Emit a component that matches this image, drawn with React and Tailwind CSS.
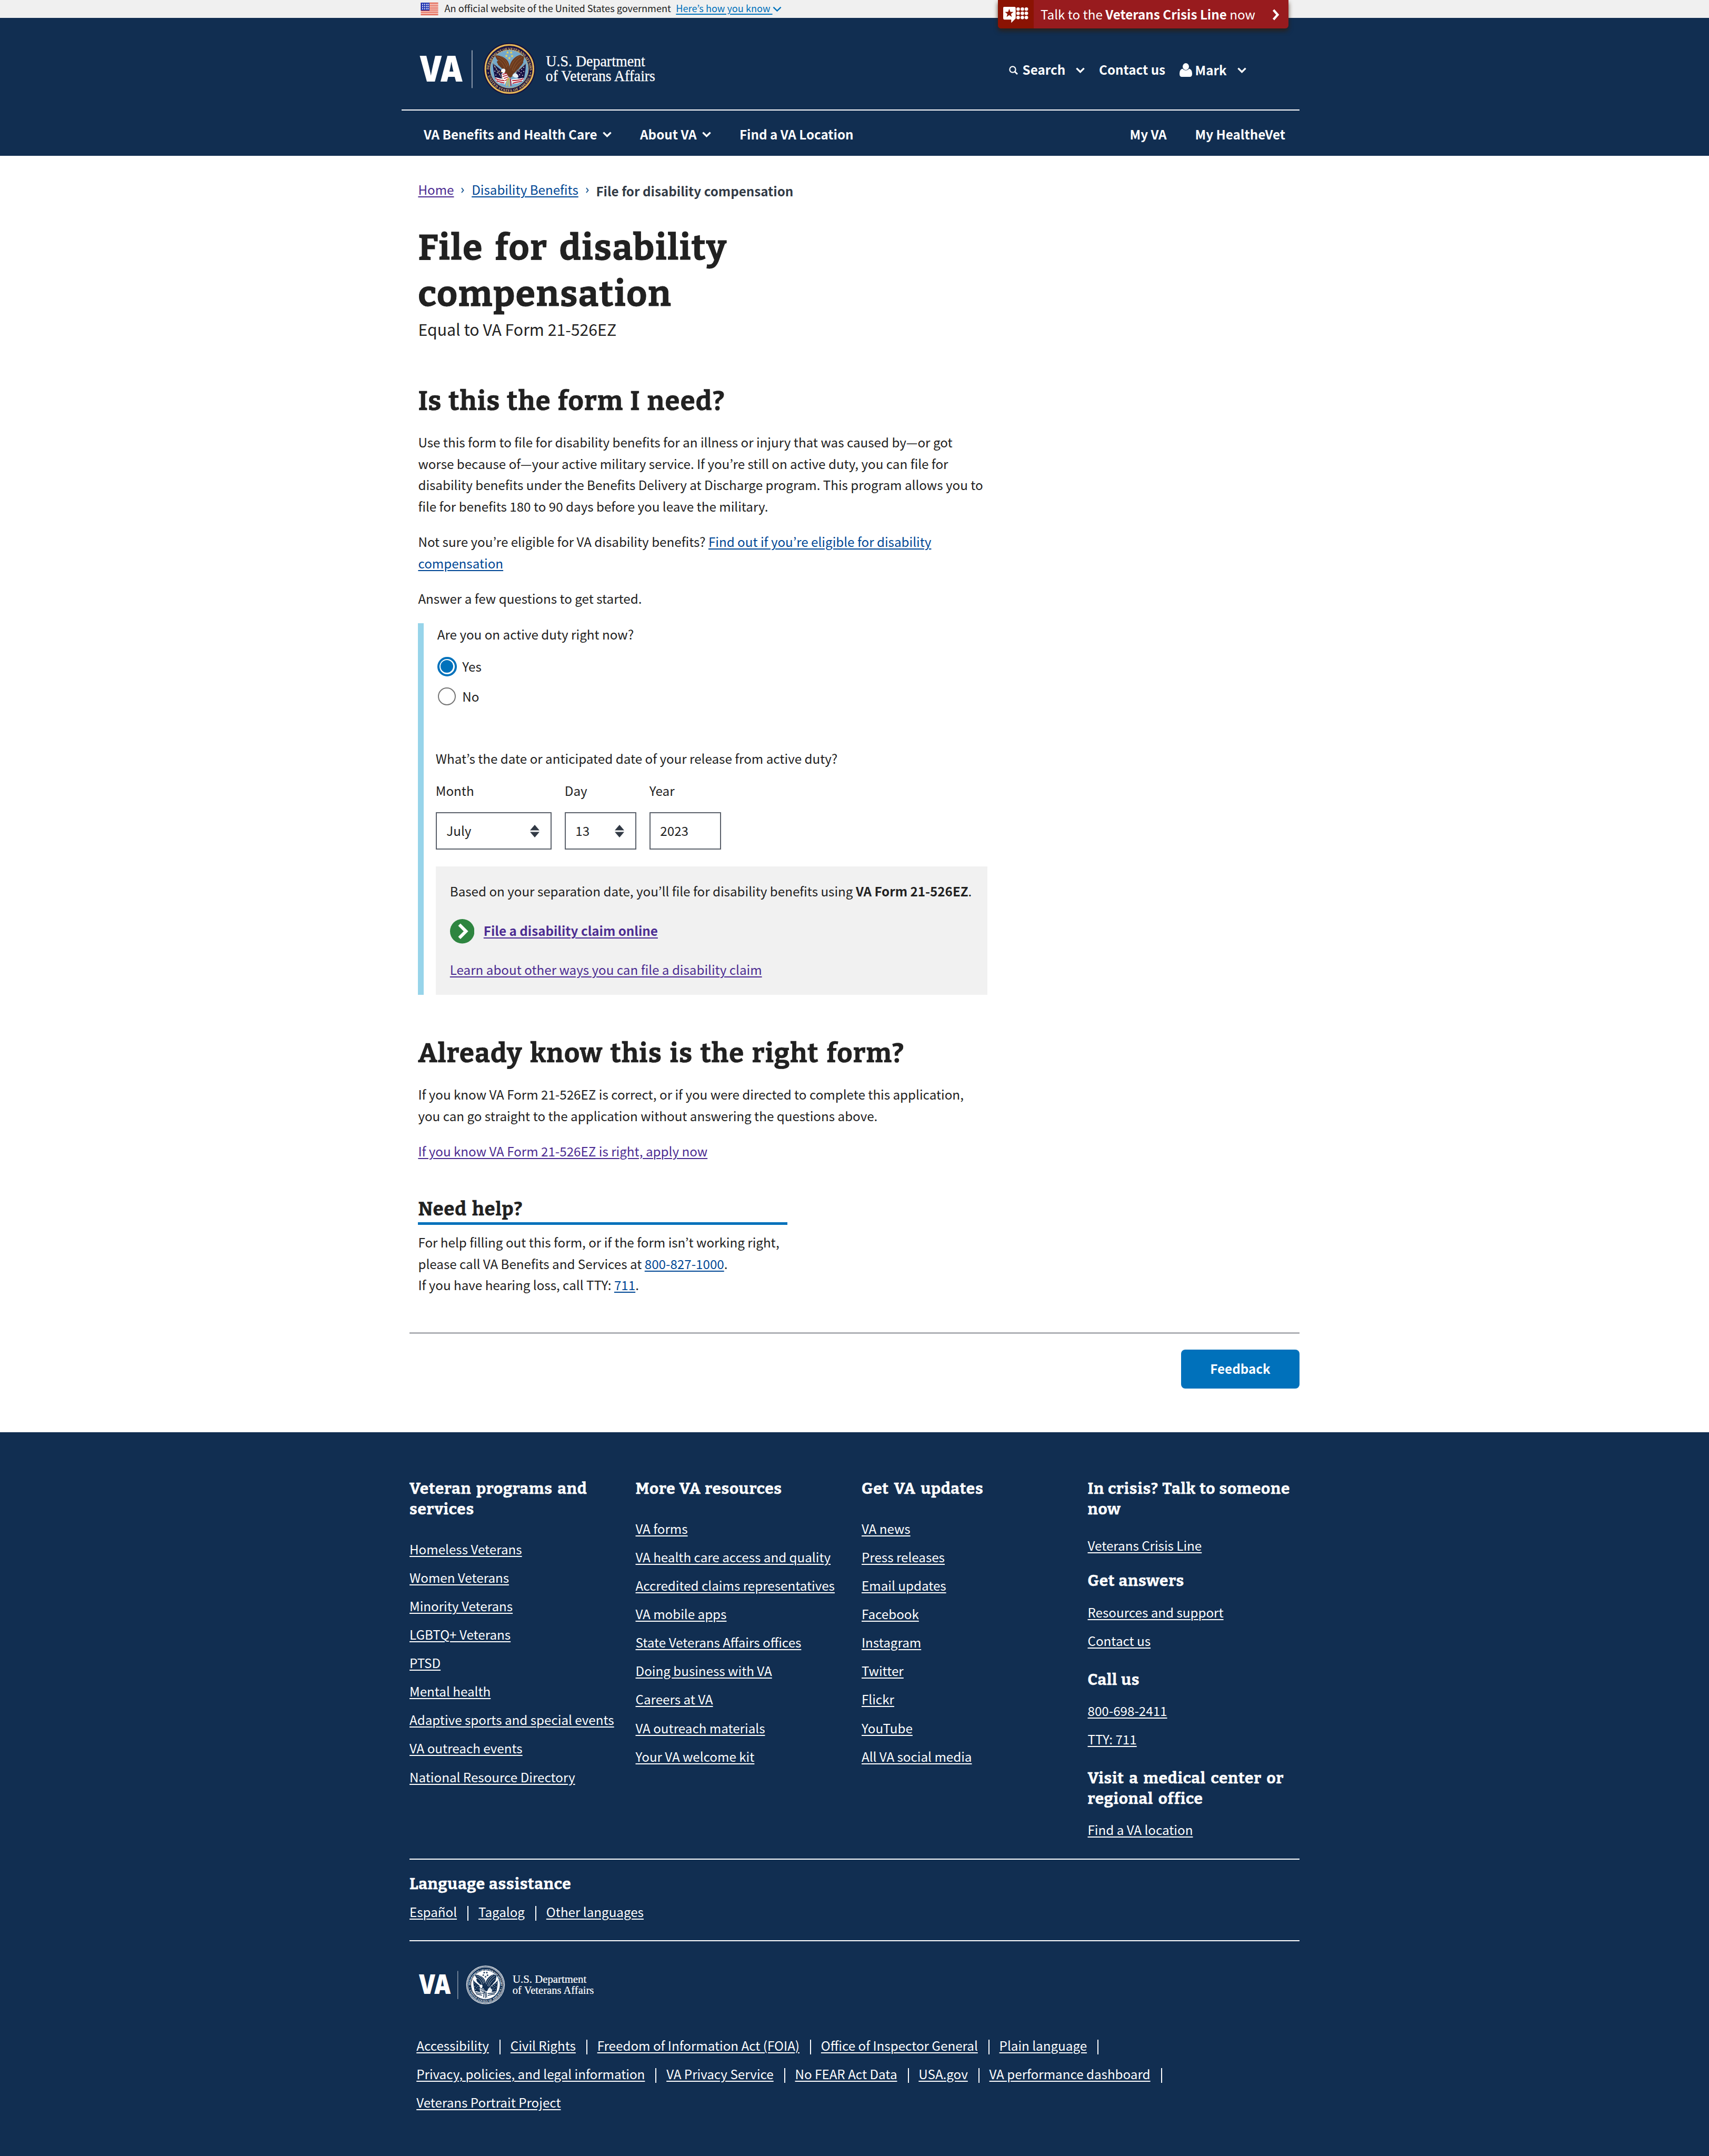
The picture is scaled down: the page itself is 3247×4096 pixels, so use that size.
import React from "react";

const SANS = "font-['Noto_Sans_CJK_KR','Noto_Sans',sans-serif]";
const SLAB = "font-['Bitter','DejaVu_Serif_Condensed','DejaVu_Serif',serif] font-bold tracking-[0.0255em] [-webkit-text-stroke:0.014em_currentColor]";
const LINK = "underline decoration-[2px] underline-offset-[3px]";

function Chevron({ className = "", w = 3.4 }) {
  return (
    <svg viewBox="0 0 17 11" className={`h-[11px] w-[17px] shrink-0 ${className}`} fill="none" stroke="currentColor" strokeWidth={w}>
      <path d="M1.4 1.6 L8.5 8.6 L15.6 1.6" />
    </svg>
  );
}

function Flag() {
  return (
    <svg viewBox="0 0 40 29" className="mt-[5px] h-[24px] w-[34px] shrink-0">
      <rect width="40" height="29" fill="#fff" />
      {[0, 4.5, 9, 13.4, 17.8, 22.2, 26.5].map((y) => (
        <rect key={y} y={y} width="40" height="2.4" fill="#dd4a34" />
      ))}
      <rect width="20" height="18" fill="#1e33b1" />
      {[2.5, 7.5, 12.5].map((y) => [3.5, 8, 12.5, 16].map((x) => <rect key={`${x}-${y}`} x={x} y={y} width="2" height="3" fill="#fff" />))}
    </svg>
  );
}

const star = (cx, cy, r) =>
  Array.from({ length: 10 }, (_, i) => {
    const a = (Math.PI / 5) * i - Math.PI / 2;
    const q = i % 2 ? r * 0.42 : r;
    return `${(cx + q * Math.cos(a)).toFixed(1)},${(cy + q * Math.sin(a)).toFixed(1)}`;
  }).join(" ");

function Seal({ mono, id }) {
  const wing = mono ? "#112e51" : "#6b3a1e";
  const wingHi = mono ? "#fff" : "#9a6034";
  const navy = mono ? "#112e51" : "#1a1446";
  const red = mono ? "#112e51" : "#b32033";
  const gold = mono ? "#fff" : "#e5c068";
  const field = mono ? "#fff" : "#74a9cc";
  return (
    <g>
      <circle cx="643" cy="225" r="175" fill={mono ? "#fff" : "#15103c"} />
      {mono && <circle cx="643" cy="225" r="170" fill="#112e51" />}
      <circle cx="643" cy="225" r="162" fill="none" stroke={mono ? "#fff" : "#d9a441"} strokeWidth="11" />
      <circle cx="643" cy="225" r="162" fill="none" stroke={mono ? "#112e51" : "#f7dc8c"} strokeWidth={mono ? 11 : 7} strokeDasharray="4 5" />
      <circle cx="643" cy="225" r="154" fill={navy} />
      <circle cx="643" cy="225" r="129" fill={field} stroke={gold} strokeWidth="3" />
      <defs>
        <path id={`${id}-top`} d="M 506 235 A 137 137 0 1 1 780 235" />
        <path id={`${id}-bot`} d="M 493 245 A 151 151 0 0 0 793 245" />
      </defs>
      <g fill={gold} fontFamily="'Liberation Serif', serif" fontWeight="700" fontSize="24">
        <text>
          <textPath href={`#${id}-top`} startOffset="6" textLength="425">DEPARTMENT OF VETERANS AFFAIRS</textPath>
        </text>
        <text>
          <textPath href={`#${id}-bot`} startOffset="28" textLength="392">UNITED STATES OF AMERICA</textPath>
        </text>
      </g>
      <circle cx="501" cy="252" r="4" fill={gold} />
      <circle cx="786" cy="252" r="4" fill={gold} />
      {[[631, 114], [655, 114], [623, 137], [661, 138], [643, 152]].map(([x, y]) => (
        <polygon key={`${x}`} points={star(x, y, 11)} fill={mono ? "#112e51" : "#f0d24f"} />
      ))}
      <path d="M533 184 C545 200 565 212 588 232 L602 262 L592 292 C575 292 560 280 545 284 C540 250 530 220 533 184Z" fill={navy} />
      <path d="M753 186 C740 205 715 222 690 242 L688 268 L700 288 C715 292 728 284 742 288 C748 255 755 225 753 186Z" fill={navy} />
      {[[545, 210], [556, 226], [545, 240], [562, 250], [552, 266], [574, 240], [578, 262], [740, 214], [726, 228], [740, 242], [722, 250], [732, 268], [708, 240], [712, 264]].map(([x, y]) => (
        <circle key={`${x}-${y}`} cx={x} cy={y} r="3.2" fill="#fff" />
      ))}
      <path d="M545 284 C560 278 575 292 592 290 L625 300 L612 330 C600 325 590 318 580 322 C565 320 552 306 545 284Z" fill="#fff" />
      <path d="M742 286 C725 282 712 292 700 290 L655 296 L660 328 C680 322 700 325 712 316 C728 314 738 300 742 286Z" fill="#fff" />
      <g fill="none" stroke={red} strokeWidth="7">
        <path d="M547 288 C560 298 580 302 612 304" />
        <path d="M557 304 C572 316 590 312 610 320" />
        <path d="M738 290 C722 302 700 300 662 304" />
        <path d="M728 306 C710 314 690 312 664 322" />
      </g>
      <path d="M528 177 L600 300 M758 185 L660 275" stroke={mono ? "#112e51" : "#d9c27a"} strokeWidth="3" />
      <path d="M547 135 C575 130 612 145 632 172 C640 185 645 200 643 226 L612 236 C600 230 604 222 592 222 C590 214 578 212 576 204 C566 200 566 192 562 184 C556 178 558 172 568 172 C558 160 552 150 547 135Z" fill={wing} />
      <path d="M741 152 C744 140 736 134 728 138 L722 130 C690 132 664 160 653 182 C646 196 638 220 640 248 L668 262 C676 248 690 244 694 232 C708 226 710 216 718 206 C730 198 728 190 738 182 C732 178 740 170 741 152Z" fill={wing} />
      <g fill="none" stroke={wingHi} strokeWidth="3">
        <path d="M560 142 C588 152 612 172 626 214" />
        <path d="M566 162 C588 174 602 190 612 222" />
        <path d="M580 140 C605 150 626 172 634 206" />
        <path d="M728 146 C700 160 676 186 662 236" />
        <path d="M730 166 C706 182 684 206 672 240" />
        <path d="M712 138 C684 154 664 178 650 220" />
      </g>
      <path d="M604 226 C620 218 645 224 664 252 C668 268 660 284 648 284 C636 276 622 262 608 250Z" fill={wing} />
      <path d="M586 246 C586 230 596 220 610 224 C620 230 618 244 606 252 C600 246 592 246 586 246Z" fill="#fff" />
      <path d="M582 250 L588 240 L594 246Z" fill={mono ? "#112e51" : "#e3a52c"} />
      <path d="M590 258 C600 246 622 250 630 264 L640 288 L620 310 C602 302 590 282 590 258Z" fill="#fff" />
      <g stroke={red} strokeWidth="6">
        <path d="M596 262 L626 254" />
        <path d="M598 276 L632 266" />
        <path d="M606 290 L636 278" />
        <path d="M614 304 L640 290" />
      </g>
      <path d="M664 270 C668 258 680 250 690 256 C704 266 706 276 702 282 C690 286 674 284 664 270Z" fill="#e8eef4" />
      <g stroke={mono ? "#112e51" : "#e9c33c"} strokeWidth="6">
        <path d="M632 285 L624 340" />
        <path d="M640 285 L642 345" />
      </g>
      <path d="M650 290 L654 340" stroke={red} strokeWidth="6" />
    </g>
  );
}

/* Wordmark, rule, seal and department name */
function Logo({ mono = false, id, className }) {
  return (
    <svg viewBox="940 90 560 130" className={className}>
      <text x="941.5" y="183" fontFamily="Inter, 'Liberation Sans', sans-serif" fontWeight="900" fontSize="80" fill="#fff" textLength="99" lengthAdjust="spacingAndGlyphs">VA</text>
      <rect x="1059.5" y="113" width="2" height="85" fill="#fff" opacity=".6" />
      <g transform="translate(930 80) scale(.33333)">
        <Seal mono={mono} id={id} />
      </g>
      <g fill="#fff" stroke="#fff" strokeWidth=".35" fontFamily="'Liberation Serif', serif" fontWeight="400" fontSize="34">
        <text x="1226.5" y="149" textLength="223" lengthAdjust="spacingAndGlyphs">U.S. Department</text>
        <text x="1226" y="182.3" textLength="246" lengthAdjust="spacingAndGlyphs">of Veterans Affairs</text>
      </g>
    </svg>
  );
}

function Banner() {
  return (
    <div className="flex h-[34px] items-start bg-[#f0f0f0] pl-[799px] text-[18.15px] leading-[31px]">
      <Flag />
      <span className="ml-[11.5px]">An official website of the United States government</span>
      <a className={`ml-[9.5px] whitespace-pre text-[#0071bb] ${LINK}`}>Here’s how you know </a>
      <Chevron w={2.4} className="mt-[12px] text-[#0071bb]" />
    </div>
  );
}

function CrisisLine() {
  return (
    <div className="absolute left-[1895.5px] top-0 flex h-[54px] w-[552.5px] rounded-b-[6px] bg-[#981b1e] text-white shadow-[0_5px_9px_rgba(50,30,10,0.75)]">
      <div className="flex w-[68px] shrink-0 rounded-bl-[6px] bg-[#8b1303] pl-[10.5px] pt-[13px]">
        <svg viewBox="0 0 56 36" className="h-[30.5px] w-[47.5px]" fill="#fff">
          <path d="M2 0 H25 Q28 0 28 3 V26 L18 36 V28.5 H3 Q0 28.5 0 25.5 V2 Q0 0 2 0Z" />
          <polygon points={star(13.5, 14.5, 10)} fill="#8b1303" />
          {[5, 14.5, 24].map((y) => [33.5, 43, 52].map((x) => <circle key={`${x}-${y}`} cx={x} cy={y} r="3.9" />))}
        </svg>
      </div>
      <span className="ml-[13.5px] whitespace-nowrap text-[24.2px] leading-[53px]">
        Talk to the <b>Veterans Crisis Line</b> now
      </span>
      <svg viewBox="0 0 14 22" className="ml-auto mr-[17.5px] mt-[16.5px] h-[22px] w-[14px]" fill="none" stroke="#fff" strokeWidth="4.2">
        <path d="M2.5 2 L10.5 11 L2.5 20" />
      </svg>
    </div>
  );
}

function Header() {
  return (
    <header className="h-[262px] bg-[#112e51] pl-[763px] text-[24.2px] font-bold leading-[40px] text-white">
      <div className="flex h-[176px] w-[1706px] border-b-2 border-white">
        <Logo id="hd" className="ml-[32px] mt-[42px] h-[110px] w-[473.5px] shrink-0" />
        <div className="ml-[648.6px] mt-[78px] flex h-[40px] shrink-0 items-center whitespace-nowrap">
          <svg viewBox="0 0 17 17" className="mt-[2px] h-[17px] w-[17px]" fill="none" stroke="#fff" strokeWidth="2.2">
            <circle cx="7" cy="7" r="5.6" />
            <path d="M11 11 L16 16" strokeWidth="2.8" />
          </svg>
          <span className="ml-[8.5px] w-[81px]">Search</span>
          <Chevron className="ml-[20.5px] mt-[2px]" />
          <span className="ml-[27px] w-[125px]">Contact us</span>
          <svg viewBox="0 0 24 26" className="ml-[28px] mt-[2px] h-[26px] w-[24px]" fill="#fff">
            <ellipse cx="12" cy="6.5" rx="6" ry="6.5" />
            <path d="M5.5 10.5 Q12 17 18.5 10.5 Q24 12 24 20 Q24 26 19.5 26 H4.5 Q0 26 0 20 Q0 12 5.5 10.5Z" />
          </svg>
          <span className="ml-[5.5px] mt-[2px] w-[60px]">Mark</span>
          <Chevron className="ml-[20.5px] mt-[2px]" />
        </div>
      </div>
      <nav className="flex h-[86px] w-[1706px] items-center whitespace-nowrap pl-[42px] pr-[27px] pt-[4px]">
        <span>VA Benefits and Health Care</span>
        <Chevron className="ml-[10.5px] mt-[1px]" />
        <span className="ml-[54px]">About VA</span>
        <Chevron className="ml-[10.5px] mt-[1px]" />
        <span className="ml-[54px]">Find a VA Location</span>
        <span className="ml-auto">My VA</span>
        <span className="ml-[54px]">My HealtheVet</span>
      </nav>
    </header>
  );
}

function Crumb() {
  return (
    <svg viewBox="0 0 6 11" className="ml-[14px] mr-[13.7px] mt-[3px] h-[11px] w-[6px]" fill="none" stroke="#1d5a95" strokeWidth="2">
      <path d="M1 1 L4.5 5.5 L1 10" />
    </svg>
  );
}

function Sort() {
  return (
    <svg viewBox="0 0 18 24" className="h-[24px] w-[18px]" fill="#323a45">
      <path d="M9 0 L18 10.5 H0Z M9 24 L18 13.5 H0Z" />
    </svg>
  );
}

function DateField({ label, value, width, select, gap }) {
  return (
    <div className={gap}>
      <div>{label}</div>
      <div className={`mt-[21px] flex h-[71px] items-center justify-between border-2 border-[#5b616b] bg-white pb-[2px] pl-[18.5px] pr-[21px] ${width}`}>
        <span>{value}</span>
        {select && <span className="mt-[3px]"><Sort /></span>}
      </div>
    </div>
  );
}

function Main() {
  return (
    <main className="h-[2425px] overflow-hidden pl-[794.4px] text-[24.2px] leading-[40.6px]">
      <div className="mt-[43.5px] flex h-[41px] items-center whitespace-nowrap">
        <a className={`text-[#4c2c92] ${LINK}`}>Home</a>
        <Crumb />
        <a className={`text-[#004795] ${LINK}`}>Disability Benefits</a>
        <Crumb />
        <span className="mt-[6px] font-bold text-[#323a45]">File for disability compensation</span>
      </div>
      <h1 className={`mt-[46px] text-[67.65px] leading-[88.9px] [word-spacing:0.12em] ${SLAB}`}>File for disability<br />compensation</h1>
      <p className="mt-[0.5px] text-[30.25px] leading-[40px]">Equal to VA Form 21-526EZ</p>
      <h2 className={`mt-[87px] text-[50.74px] leading-[60px] [word-spacing:0.045em] ${SLAB}`}>Is this the form I need?</h2>
      <p className="mt-[28.2px]">
        Use this form to file for disability benefits for an illness or injury that was caused by—or got<br />
        worse because of—your active military service. If you’re still on active duty, you can file for<br />
        disability benefits under the Benefits Delivery at Discharge program. This program allows you to<br />
        file for benefits 180 to 90 days before you leave the military.
      </p>
      <p className="mt-[26.8px]">
        Not sure you’re eligible for VA disability benefits?{" "}
        <a className={`text-[#004795] ${LINK}`}>Find out if you’re eligible for disability<br />compensation</a>
      </p>
      <p className="mt-[26.8px]">Answer a few questions to get started.</p>

      <section className="mt-[26.6px] h-[705.8px] w-[1081.8px] border-l-[11px] border-[#97d4ea] pl-[22.4px]">
        <div className="pl-[3px] pt-[0.3px]">
          <p>Are you on active duty right now?</p>
          <div className="mt-[20.5px] flex items-center">
            <span className="flex size-[37px] items-center justify-center rounded-full border-[4px] border-[#0071bb]">
              <span className="size-[24px] rounded-full bg-[#0071bb]" />
            </span>
            <span className="ml-[10.5px]">Yes</span>
          </div>
          <div className="mt-[16.6px] flex items-center">
            <span className="ml-[1.5px] size-[34px] rounded-full border-2 border-[#757575]" />
            <span className="ml-[12px]">No</span>
          </div>
        </div>
        <p className="mt-[77.6px]">What’s the date or anticipated date of your release from active duty?</p>
        <div className="mt-[20.2px] flex">
          <DateField label="Month" value="July" width="w-[220px]" gap="" select />
          <DateField label="Day" value="13" width="w-[136px]" gap="ml-[25px]" select />
          <DateField label="Year" value="2023" width="w-[136px]" gap="ml-[25px]" />
        </div>
        <div className="mt-[32px] h-[243.7px] bg-[#f1f1f1] pl-[27px] pt-[26.6px]">
          <p className="whitespace-nowrap">Based on your separation date, you’ll file for disability benefits using <b>VA Form 21-526EZ</b>.</p>
          <div className="mt-[32.8px] flex h-[46.5px] items-center">
            <svg viewBox="0 0 46 46" className="size-[46.5px]">
              <circle cx="23" cy="23" r="23" fill="#2e8540" />
              <path d="M17.5 10.5 L30 23 L17.5 35.5" fill="none" stroke="#fff" strokeWidth="6" />
            </svg>
            <a className={`mb-[2px] ml-[17.5px] font-bold text-[#4c2c92] ${LINK}`}>File a disability claim online</a>
          </div>
          <p className="mt-[28.8px]"><a className={`text-[#4c2c92] ${LINK}`}>Learn about other ways you can file a disability claim</a></p>
        </div>
      </section>

      <h2 className={`mt-[80.4px] text-[50.74px] leading-[60px] [word-spacing:0.08em] ${SLAB}`}>Already know this is the right form?</h2>
      <p className="mt-[28.4px]">
        If you know VA Form 21-526EZ is correct, or if you were directed to complete this application,<br />
        you can go straight to the application without answering the questions above.
      </p>
      <p className="mt-[26.8px]"><a className={`text-[#4c2c92] ${LINK}`}>If you know VA Form 21-526EZ is right, apply now</a></p>
      <h3 className={`mt-[67.8px] h-[51.7px] w-[701.5px] border-b-[5px] border-[#0071bb] text-[36px] leading-[44px] [word-spacing:0.08em] ${SLAB}`}>Need help?</h3>
      <p className="mt-[13px]">
        For help filling out this form, or if the form isn’t working right,<br />
        please call VA Benefits and Services at <a className={`text-[#004795] ${LINK}`}>800-827-1000</a>.<br />
        If you have hearing loss, call TTY: <a className={`text-[#004795] ${LINK}`}>711</a>.
      </p>
      <div className="-ml-[16.4px] mt-[68.8px] w-[1691px] border-t-[3px] border-[#aeb0b5] pt-[30px]">
        <button className="ml-auto block h-[74.4px] w-[225px] rounded-[8px] bg-[#0071bb] text-center font-bold text-white">Feedback</button>
      </div>
    </main>
  );
}

function FootLinks({ items, className }) {
  return (
    <ul className={`flex flex-col gap-[13.5px] ${className}`}>
      {items.map((t) => <li key={t}><a className={LINK}>{t}</a></li>)}
    </ul>
  );
}

const HEAD_BASE = `text-[29.76px] leading-[38.9px] ${SLAB}`;
const HEAD = `${HEAD_BASE} [word-spacing:0.04em]`;
const HEAD_LOOSE = `${HEAD_BASE} [word-spacing:0.12em]`;

function LinkRow({ items, trail }) {
  return (
    <div className="flex items-center">
      {items.map((t, i) => (
        <React.Fragment key={t}>
          <a className={LINK}>{t}</a>
          {(trail || i < items.length - 1) && <span className="ml-[20px] mr-[18.8px] mt-[5px] h-[28px] w-[2px] bg-white" />}
        </React.Fragment>
      ))}
    </div>
  );
}

function Footer() {
  return (
    <footer className="h-[1375px] whitespace-nowrap bg-[#112e51] pl-[778px] pt-[87.6px] text-[24.2px] leading-[40.6px] text-white">
      <div className="w-[1691px]">
        <div className="grid h-[722.4px] grid-cols-[429.5px_429.5px_429.5px_1fr]">
          <div>
            <h3 className={HEAD_LOOSE}>Veteran programs and<br />services</h3>
            <FootLinks className="mt-[36.4px]" items={["Homeless Veterans", "Women Veterans", "Minority Veterans", "LGBTQ+ Veterans", "PTSD", "Mental health", "Adaptive sports and special events", "VA outreach events", "National Resource Directory"]} />
          </div>
          <div>
            <h3 className={HEAD}>More VA resources</h3>
            <FootLinks className="mt-[36.4px]" items={["VA forms", "VA health care access and quality", "Accredited claims representatives", "VA mobile apps", "State Veterans Affairs offices", "Doing business with VA", "Careers at VA", "VA outreach materials", "Your VA welcome kit"]} />
          </div>
          <div>
            <h3 className={HEAD_LOOSE}>Get VA updates</h3>
            <FootLinks className="mt-[36.4px]" items={["VA news", "Press releases", "Email updates", "Facebook", "Instagram", "Twitter", "Flickr", "YouTube", "All VA social media"]} />
          </div>
          <div>
            <h3 className={HEAD}>In crisis? Talk to someone<br />now</h3>
            <FootLinks className="mt-[29.8px]" items={["Veterans Crisis Line"]} />
            <h3 className={`mt-[27.4px] ${HEAD}`}>Get answers</h3>
            <FootLinks className="mt-[19.7px]" items={["Resources and support", "Contact us"]} />
            <h3 className={`mt-[34.4px] ${HEAD}`}>Call us</h3>
            <FootLinks className="mt-[19.2px]" items={["800-698-2411", "TTY: 711"]} />
            <h3 className={`mt-[34.4px] ${HEAD_LOOSE}`}>Visit a medical center or<br />regional office</h3>
            <FootLinks className="mt-[19.2px]" items={["Find a VA location"]} />
          </div>
        </div>
        <div className="h-[157px] border-y-2 border-white pt-[26.9px]">
          <h3 className={HEAD}>Language assistance</h3>
          <div className="mt-[13.1px]"><LinkRow items={["Español", "Tagalog", "Other languages"]} /></div>
        </div>
        <Logo mono id="ft" className="ml-[15.6px] mt-[42.4px] h-[81.7px] w-[352px]" />
        <div className="ml-[13.2px] mt-[54px] flex flex-col gap-[13.5px]">
          <LinkRow trail items={["Accessibility", "Civil Rights", "Freedom of Information Act (FOIA)", "Office of Inspector General", "Plain language"]} />
          <LinkRow trail items={["Privacy, policies, and legal information", "VA Privacy Service", "No FEAR Act Data", "USA.gov", "VA performance dashboard"]} />
          <LinkRow items={["Veterans Portrait Project"]} />
        </div>
      </div>
    </footer>
  );
}

export default function App() {
  return (
    <div className={`relative w-[3247px] bg-white text-[#212121] ${SANS}`}>
      <Banner />
      <Header />
      <Main />
      <Footer />
      <CrisisLine />
    </div>
  );
}
